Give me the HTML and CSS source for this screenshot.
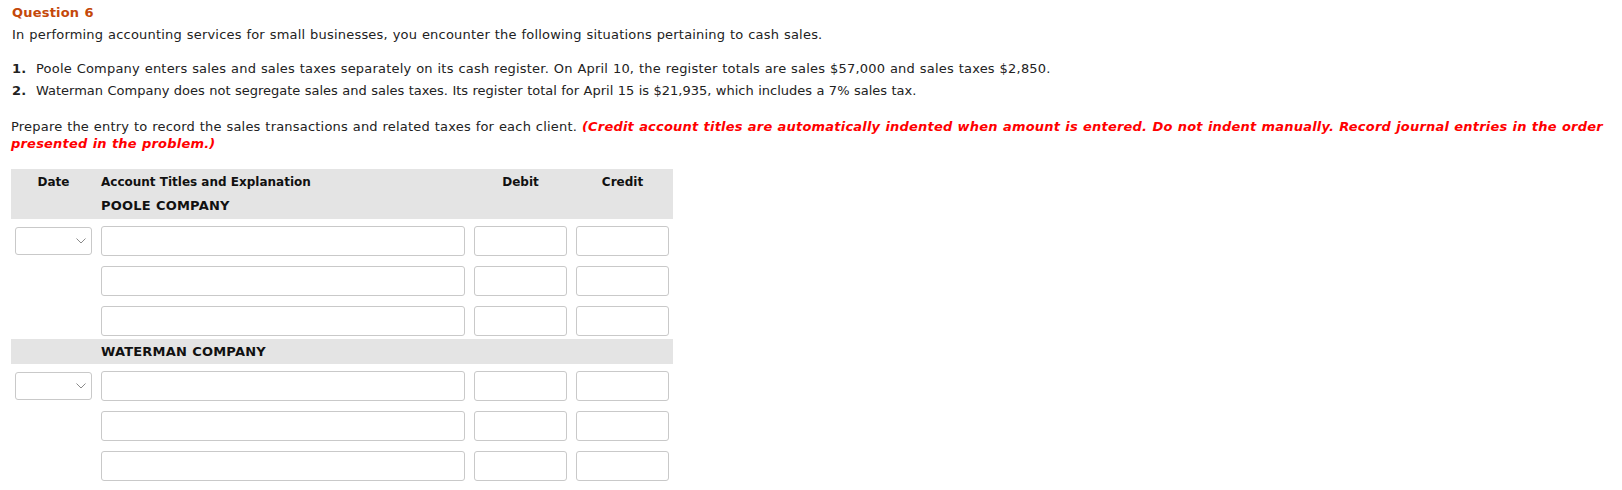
FILE: index.html
```html
<!DOCTYPE html>
<html>
<head>
<meta charset="utf-8">
<link rel="stylesheet" href="styles.css">
</head>
<body>
<div class="page">
  <h2 class="q-title">Question 6</h2>
  <p class="intro">In performing accounting services for small businesses, you encounter the following situations pertaining to cash sales.</p>
  <ol class="items">
    <li><span class="num">1.</span><span>Poole Company enters sales and sales taxes separately on its cash register. On April 10, the register totals are sales $57,000 and sales taxes $2,850.</span></li>
    <li><span class="num">2.</span><span class="tight">Waterman Company does not segregate sales and sales taxes. Its register total for April 15 is $21,935, which includes a 7% sales tax.</span></li>
  </ol>
  <p class="prompt">Prepare the entry to record the sales transactions and related taxes for each client. <em class="warn">(Credit account titles are automatically indented when amount is entered. Do not indent manually. Record journal entries in the order presented in the problem.)</em></p>

  <div class="journal">
    <div class="head">
      <div class="grid hrow">
        <div class="c-date">Date</div>
        <div class="c-acct">Account Titles and Explanation</div>
        <div class="c-num">Debit</div>
        <div class="c-num">Credit</div>
      </div>
      <div class="grid hrow2">
        <div></div>
        <div class="c-acct co">POOLE COMPANY</div>
      </div>
    </div>
    <div class="body">
      <div class="grid row">
        <div class="sel"><svg class="chev" width="10" height="6" viewBox="0 0 10 6"><path d="M0.5 0.5 L5 5 L9.5 0.5" fill="none" stroke="#8a8a8a" stroke-width="1"/></svg></div>
        <div class="inp"></div><div class="inp"></div><div class="inp"></div>
      </div>
      <div class="grid row">
        <div></div>
        <div class="inp"></div><div class="inp"></div><div class="inp"></div>
      </div>
      <div class="grid row">
        <div></div>
        <div class="inp"></div><div class="inp"></div><div class="inp"></div>
      </div>
    </div>
    <div class="sub">
      <div class="grid hrow3">
        <div></div>
        <div class="c-acct co">WATERMAN COMPANY</div>
      </div>
    </div>
    <div class="body">
      <div class="grid row">
        <div class="sel"><svg class="chev" width="10" height="6" viewBox="0 0 10 6"><path d="M0.5 0.5 L5 5 L9.5 0.5" fill="none" stroke="#8a8a8a" stroke-width="1"/></svg></div>
        <div class="inp"></div><div class="inp"></div><div class="inp"></div>
      </div>
      <div class="grid row">
        <div></div>
        <div class="inp"></div><div class="inp"></div><div class="inp"></div>
      </div>
      <div class="grid row">
        <div></div>
        <div class="inp"></div><div class="inp"></div><div class="inp"></div>
      </div>
    </div>
  </div>
</div>
</body>
</html>
```

FILE: styles.css
```css
html, body {
  margin: 0;
  padding: 0;
  background: #fff;
}
body {
  font-family: Verdana, "DejaVu Sans", sans-serif;
  font-size: 13px;
  color: #222;
  letter-spacing: 0.2px;
  word-spacing: 0.45px;
}
.page {
  padding: 3px 0 0 11px;
  width: 1608px;
}
.q-title {
  margin: 0;
  padding-left: 1px;
  font-size: 13px;
  font-weight: bold;
  line-height: 20px;
  color: #c4480a;
}
.intro {
  margin: 2px 0 0 1px;
  line-height: 20px;
}
.items {
  list-style: none;
  margin: 13px 0 0 1px;
  padding: 0;
}
.items li {
  display: flex;
  line-height: 22px;
}
.num {
  font-weight: bold;
  width: 24px;
  flex: none;
}
.tight {
  letter-spacing: 0;
  word-spacing: 0.3px;
}
.prompt {
  margin: 16px 0 0 0;
  line-height: 17px;
}
.warn {
  color: #f00;
  font-weight: bold;
  font-style: italic;
}
.journal {
  margin-top: 17px;
  width: 662px;
}
.grid {
  display: grid;
  grid-template-columns: 77px 364px 93px 93px;
  column-gap: 9px;
  padding: 0 4px;
}
.head {
  background: #e4e4e4;
  height: 50px;
  font-size: 12px;
  font-weight: bold;
  color: #111;
  letter-spacing: 0;
  word-spacing: 0;
}
.hrow {
  padding-top: 3px;
  height: 22px;
  line-height: 21px;
}
.hrow2 {
  height: 24px;
  line-height: 24px;
}
.co {
  font-size: 13px;
  letter-spacing: 0.2px;
  word-spacing: 0.45px;
}
.c-date, .c-num {
  text-align: center;
}
.sub {
  background: #e4e4e4;
  height: 25px;
  font-weight: bold;
  color: #111;
}
.hrow3 {
  line-height: 25px;
}
.body {
  padding-top: 7px;
}
.row {
  height: 30px;
  margin-bottom: 10px;
}
.body .row:last-child {
  margin-bottom: 3px;
}
.inp {
  box-sizing: border-box;
  height: 30px;
  border: 1px solid #c9c9c9;
  border-radius: 3px;
  background: #fff;
}
.sel {
  box-sizing: border-box;
  height: 28px;
  margin-top: 1px;
  border: 1px solid #c9c9c9;
  border-radius: 3px;
  background: #fff;
  display: flex;
  align-items: center;
  justify-content: flex-end;
  padding-right: 5px;
}
.chev {
  display: block;
}
```
